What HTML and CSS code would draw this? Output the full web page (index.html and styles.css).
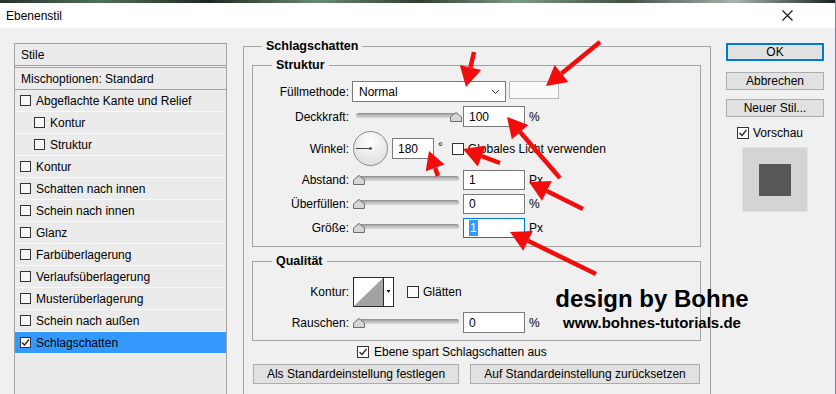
FILE: index.html
```html
<!DOCTYPE html>
<html lang="de">
<head>
    <meta charset="UTF-8">
    <meta name="viewport" content="width=device-width, initial-scale=1.0">
    <title>Ebenenstil</title>
    <link rel="stylesheet" href="styles.css">
</head>
<body>
    <div class="window">
        <div class="photo-strip"></div>
        <div class="title-bar">
            <span class="title">Ebenenstil</span>
            <svg class="close" width="11" height="11" viewBox="0 0 11 11">
                <path d="M0.5 0.5 L10.5 10.5 M10.5 0.5 L0.5 10.5" stroke="#111" stroke-width="1.1" fill="none"/>
            </svg>
        </div>

        <div class="dialog">
            <!-- Stile list -->
            <ul class="style-list">
                <li class="list-head">Stile</li>
                <li class="list-blend">Mischoptionen: Standard</li>
                <li><span class="check"></span>Abgeflachte Kante und Relief</li>
                <li class="sub"><span class="check"></span>Kontur</li>
                <li class="sub"><span class="check"></span>Struktur</li>
                <li><span class="check"></span>Kontur</li>
                <li><span class="check"></span>Schatten nach innen</li>
                <li><span class="check"></span>Schein nach innen</li>
                <li><span class="check"></span>Glanz</li>
                <li><span class="check"></span>Farbüberlagerung</li>
                <li><span class="check"></span>Verlaufsüberlagerung</li>
                <li><span class="check"></span>Musterüberlagerung</li>
                <li><span class="check"></span>Schein nach außen</li>
                <li class="selected">
                    <span class="check">
                        <svg width="9" height="9" viewBox="0 0 9 9"><path d="M1 4.5 L3.5 7 L8 1.5" stroke="#222" stroke-width="1.2" fill="none"/></svg>
                    </span>Schlagschatten
                </li>
            </ul>

            <!-- Settings -->
            <div class="settings">
                <fieldset class="group outer">
                    <legend>Schlagschatten</legend>

                    <fieldset class="group inner struktur">
                        <legend>Struktur</legend>

                        <div class="row r-fill">
                            <label>Füllmethode:</label>
                            <div class="select">
                                <span>Normal</span>
                                <svg width="9" height="6" viewBox="0 0 9 6"><path d="M1 1 L4.5 4.5 L8 1" stroke="#333" stroke-width="1" fill="none"/></svg>
                            </div>
                            <div class="swatch"></div>
                        </div>

                        <div class="row r-opacity">
                            <label>Deckkraft:</label>
                            <div class="slider">
                                <div class="track"></div>
                                <svg class="thumb at-end" width="12" height="10" viewBox="0 0 12 10"><polygon points="0.5,9.5 0.5,5 6,0.5 11.5,5 11.5,9.5" fill="#d6d6d6" stroke="#6e6e6e"/></svg>
                            </div>
                            <div class="field">100</div>
                            <span class="unit">%</span>
                        </div>

                        <div class="row r-angle">
                            <label>Winkel:</label>
                            <svg class="dial" width="35" height="35" viewBox="0 0 35 35">
                                <defs>
                                    <radialGradient id="dialFill" cx="50%" cy="30%" r="70%">
                                        <stop offset="0" stop-color="#ffffff"/>
                                        <stop offset="1" stop-color="#dedede"/>
                                    </radialGradient>
                                </defs>
                                <circle cx="17.5" cy="17.5" r="17" fill="url(#dialFill)" stroke="#8a8a8a"/>
                                <line x1="2.5" y1="17.5" x2="17.5" y2="17.5" stroke="#4a4a4a" stroke-width="1"/>
                                <circle cx="17.5" cy="17.5" r="1.3" fill="#333"/>
                            </svg>
                            <div class="field angle">180</div>
                            <span class="deg">°</span>
                            <span class="check box12 global"></span>
                            <span class="check-label">Globales Licht verwenden</span>
                        </div>

                        <div class="row r-num">
                            <label>Abstand:</label>
                            <div class="slider">
                                <div class="track"></div>
                                <svg class="thumb" width="12" height="10" viewBox="0 0 12 10"><polygon points="0.5,9.5 0.5,5 6,0.5 11.5,5 11.5,9.5" fill="#d6d6d6" stroke="#6e6e6e"/></svg>
                            </div>
                            <div class="field">1</div>
                            <span class="unit">Px</span>
                        </div>

                        <div class="row r-num">
                            <label>Überfüllen:</label>
                            <div class="slider">
                                <div class="track"></div>
                                <svg class="thumb" width="12" height="10" viewBox="0 0 12 10"><polygon points="0.5,9.5 0.5,5 6,0.5 11.5,5 11.5,9.5" fill="#d6d6d6" stroke="#6e6e6e"/></svg>
                            </div>
                            <div class="field">0</div>
                            <span class="unit">%</span>
                        </div>

                        <div class="row r-num">
                            <label>Größe:</label>
                            <div class="slider">
                                <div class="track"></div>
                                <svg class="thumb" width="12" height="10" viewBox="0 0 12 10"><polygon points="0.5,9.5 0.5,5 6,0.5 11.5,5 11.5,9.5" fill="#d6d6d6" stroke="#6e6e6e"/></svg>
                            </div>
                            <div class="field focused"><span class="sel">1</span></div>
                            <span class="unit">Px</span>
                        </div>
                    </fieldset>

                    <fieldset class="group inner quality">
                        <legend>Qualität</legend>

                        <div class="row r-contour">
                            <label>Kontur:</label>
                            <svg class="contour" width="41" height="30" viewBox="0 0 41 30">
                                <rect x="0.5" y="0.5" width="40" height="29" fill="#fff" stroke="#2a2a2a"/>
                                <polygon points="1,29 30,1 30,29" fill="#a3a3a3"/>
                                <line x1="30.5" y1="1" x2="30.5" y2="29" stroke="#2a2a2a"/>
                                <polygon points="33.5,13 37.5,13 35.5,16" fill="#111"/>
                            </svg>
                            <span class="check box12 smooth"></span>
                            <span class="check-label">Glätten</span>
                        </div>

                        <div class="row r-noise">
                            <label>Rauschen:</label>
                            <div class="slider">
                                <div class="track"></div>
                                <svg class="thumb" width="12" height="10" viewBox="0 0 12 10"><polygon points="0.5,9.5 0.5,5 6,0.5 11.5,5 11.5,9.5" fill="#d6d6d6" stroke="#6e6e6e"/></svg>
                            </div>
                            <div class="field">0</div>
                            <span class="unit">%</span>
                        </div>
                    </fieldset>

                    <div class="knockout">
                        <span class="check box12">
                            <svg width="10" height="10" viewBox="0 0 10 10"><path d="M1.5 5 L4 7.5 L8.5 2" stroke="#222" stroke-width="1.2" fill="none"/></svg>
                        </span>
                        <span>Ebene spart Schlagschatten aus</span>
                    </div>

                    <div class="defaults">
                        <div class="btn btn-set">Als Standardeinstellung festlegen</div>
                        <div class="btn btn-reset">Auf Standardeinstellung zurücksetzen</div>
                    </div>
                </fieldset>
            </div>

            <!-- Buttons right -->
            <div class="actions">
                <div class="btn btn-ok">OK</div>
                <div class="btn btn-cancel">Abbrechen</div>
                <div class="btn btn-new">Neuer Stil...</div>
                <div class="preview-toggle">
                    <span class="check box12">
                        <svg width="10" height="10" viewBox="0 0 10 10"><path d="M1.5 5 L4 7.5 L8.5 2" stroke="#222" stroke-width="1.2" fill="none"/></svg>
                    </span>
                    <span>Vorschau</span>
                </div>
                <div class="preview">
                    <div class="preview-square"></div>
                </div>
            </div>
        </div>

        <!-- red annotation arrows -->
        <svg class="arrows" width="836" height="394" viewBox="0 0 836 394">
            <g stroke="#f20d0d" stroke-width="4.5" fill="none">
                <line x1="474" y1="52" x2="470.5" y2="67.5"/>
                <line x1="600" y1="42" x2="561.5" y2="73.4"/>
                <line x1="560" y1="178" x2="520.1" y2="132.1"/>
                <line x1="500" y1="163" x2="481.7" y2="156.1"/>
                <line x1="438" y1="176" x2="435.1" y2="167.9"/>
                <line x1="583" y1="209" x2="546.9" y2="190.9"/>
                <line x1="596" y1="274" x2="528" y2="240.8"/>
            </g>
            <g fill="#f20d0d">
                <polygon points="466,87 459.8,65.1 481.2,70"/>
                <polygon points="546,86 554.6,64.9 568.4,81.9"/>
                <polygon points="507,117 528.4,124.9 511.8,139.3"/>
                <polygon points="463,149 485.6,145.8 477.8,166.4"/>
                <polygon points="429,151 444.5,164.5 425.7,171.3"/>
                <polygon points="529,182 551.8,181.1 542,200.7"/>
                <polygon points="510,232 532.8,230.9 523.2,250.7"/>
            </g>
        </svg>

        <div class="watermark">
            <div class="wm-title">design by Bohne</div>
            <div class="wm-url">www.bohnes-tutorials.de</div>
        </div>
    </div>
</body>
</html>
```

FILE: styles.css
```css
* {
    margin: 0;
    padding: 0;
    box-sizing: border-box;
}

body {
    font-family: 'Liberation Sans', Arial, sans-serif;
    font-size: 12px;
    color: #000;
    background: #f0f0f0;
}

.window {
    position: relative;
    width: 836px;
    height: 394px;
    overflow: hidden;
    background: #f0f0f0;
    border-right: 1px solid #4f8fd6;
}

.photo-strip {
    height: 3px;
    background: linear-gradient(90deg, #25322a, #51705a 12%, #1d2822 25%, #6b8a70 38%, #2f3d33 50%, #7d9a86 62%, #3f4f44 75%, #a7b2ab 88%, #1b201d);
}

.title-bar {
    height: 25px;
    background: #fff;
    display: flex;
    align-items: center;
    justify-content: space-between;
    padding: 0 42px 0 6px;
}

.dialog {
    display: flex;
    align-items: flex-start;
    padding-left: 14px;
}

/* ---------- left list ---------- */

.style-list {
    list-style: none;
    width: 213px;
    height: 400px;
    margin-top: 15px;
    border: 1px solid #a3a3a3;
    background: #ebebeb;
}

.style-list li {
    height: 22px;
    display: flex;
    align-items: center;
    padding-left: 5px;
    border-bottom: 1px solid #fafafa;
    white-space: nowrap;
}

.style-list li.sub {
    padding-left: 19px;
}

.style-list .list-head {
    height: 24px;
    padding-left: 6px;
    border-bottom: 3px double #a3a3a3;
}

.style-list .list-blend {
    padding-left: 6px;
    border-bottom: 1px solid #a3a3a3;
}

.style-list li.selected {
    background: #3399ff;
}

.check {
    flex: none;
    width: 11px;
    height: 11px;
    border: 1px solid #333;
    background: #f7f7f7;
    margin-right: 5px;
    display: flex;
    align-items: center;
    justify-content: center;
}

.check.box12 {
    width: 12px;
    height: 12px;
    background: #fcfcfc;
}

/* ---------- settings ---------- */

.settings {
    width: 468px;
    margin-left: 16px;
    margin-top: 11px;
}

.group {
    border: 1px solid #a3a3a3;
}

.group legend {
    font-weight: bold;
    font-size: 12.5px;
    line-height: 15px;
    padding: 0 4px;
}

.outer {
    height: 400px;
    padding: 0 9px 0 8px;
}

.outer > legend {
    margin-left: 10px;
}

.inner {
    padding: 0 0 8px 0;
}

.inner > legend {
    margin-left: 19px;
}

.struktur {
    margin-top: 4px;
}

.quality {
    margin-top: 7px;
    padding-bottom: 7px;
}

.row {
    display: flex;
    align-items: center;
    white-space: nowrap;
}

.row > label {
    flex: none;
    width: 96px;
    text-align: right;
}

.r-fill {
    height: 21px;
    margin-top: 8px;
    align-items: flex-start;
}

.r-fill > label {
    align-self: center;
}

.r-opacity {
    height: 21px;
    margin-top: 4px;
}

.r-angle {
    height: 35px;
    margin-top: 4px;
}

.r-num {
    height: 20px;
    margin-top: 4px;
}

.r-contour {
    height: 30px;
    margin-top: 8px;
}

.r-noise {
    height: 21px;
    margin-top: 5px;
}

.select {
    width: 154px;
    height: 21px;
    margin-left: 3px;
    border: 1px solid #7a7a7a;
    background: #fff;
    display: flex;
    align-items: center;
    justify-content: space-between;
    padding: 0 5px 0 6px;
}

.swatch {
    width: 50px;
    height: 18px;
    margin-left: 3px;
    border: 1px solid #b8b8b8;
    background: #f9f9f9;
}

.slider {
    position: relative;
    flex: none;
    width: 109px;
    height: 12px;
    margin-left: 4px;
}

.track {
    height: 5px;
    margin: 2px 3px 0;
    border-radius: 3px;
    background: linear-gradient(#8f8f8f, #c4c4c4 60%, #dadada);
}

.thumb {
    position: absolute;
    top: 1px;
    left: 0;
}

.thumb.at-end {
    left: auto;
    right: 0;
}

.field {
    flex: none;
    width: 62px;
    height: 100%;
    margin-left: 1px;
    padding-left: 5px;
    border: 1px solid #7a7a7a;
    background: #fff;
    display: flex;
    align-items: center;
}

.field.angle {
    width: 42px;
    height: 21px;
    margin-left: 4px;
}

.field.focused {
    border-color: #0078d7;
}

.sel {
    background: #3399ff;
    color: #fff;
    padding: 0 1px;
    line-height: 16px;
}

.unit {
    margin-left: 4px;
}

.dial {
    flex: none;
    margin-left: 4px;
}

.deg {
    margin-left: 4px;
    margin-bottom: 4px;
}

.global {
    margin-left: 9px;
    margin-right: 4px;
}

.contour {
    flex: none;
    margin-left: 4px;
}

.smooth {
    margin-left: 13px;
    margin-right: 4px;
}

.knockout {
    display: flex;
    align-items: center;
    height: 14px;
    margin: 4px 0 0 105px;
}

.defaults {
    display: flex;
    gap: 11px;
    margin: 5px 0 0 1px;
}

.btn {
    height: 20px;
    border: 1px solid #adadad;
    background: #e1e1e1;
    display: flex;
    align-items: center;
    justify-content: center;
    white-space: nowrap;
}

.btn-set {
    width: 206px;
}

.btn-reset {
    width: 230px;
}

/* ---------- right column ---------- */

.actions {
    width: 98px;
    margin-left: 15px;
    margin-top: 15px;
}

.actions .btn {
    height: 18px;
}

.actions .btn-ok {
    border: 2px solid #0078d7;
}

.actions .btn-cancel {
    margin-top: 11px;
}

.actions .btn-new {
    margin-top: 9px;
}

.preview-toggle {
    display: flex;
    align-items: center;
    height: 12px;
    margin: 10px 0 0 11px;
}

.preview-toggle .check {
    margin-right: 4px;
}

.preview {
    width: 66px;
    height: 65px;
    margin: 8px 0 0 16px;
    background: #d4d4d4;
    border: 1px solid #e2e2e2;
    display: flex;
    align-items: center;
    justify-content: center;
}

.preview-square {
    width: 32px;
    height: 32px;
    background: #585858;
}

/* ---------- overlays ---------- */

.arrows {
    position: absolute;
    left: 0;
    top: 0;
}

.watermark {
    position: absolute;
    left: 555px;
    top: 287px;
    width: 194px;
    text-align: center;
    font-family: 'Liberation Sans', Arial, sans-serif;
    font-weight: bold;
    color: #000;
}

.wm-title {
    font-size: 24px;
    line-height: 24px;
}

.wm-url {
    font-size: 15px;
    line-height: 15px;
    margin-top: 4px;
}
```
